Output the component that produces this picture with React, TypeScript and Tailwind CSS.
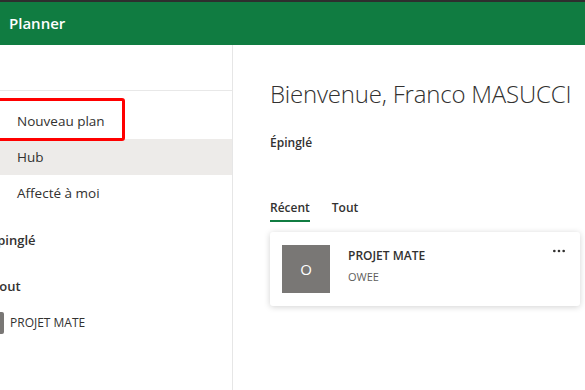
import { MoreHorizontal } from 'lucide-react';

export default function App() {
  const navItems = [
    { label: 'Nouveau plan', active: false },
    { label: 'Hub', active: true },
    { label: 'Affecté à moi', active: false },
  ];

  return (
    <div className="w-[585px] h-[390px] overflow-hidden bg-white flex flex-col font-['Open_Sans',sans-serif] text-[#323130]">
      {/* Header */}
      <div className="h-[45px] shrink-0 bg-[#107c41] border-t-2 border-[#2e2e2e] flex items-center px-[9px]">
        <span className="text-white font-semibold text-[15px]">Planner</span>
      </div>

      <div className="flex flex-1 min-h-0">
        {/* Sidebar */}
        <div className="w-[233px] shrink-0 border-r border-[#e6e6e6] flex flex-col relative">
          <div className="h-[46px] border-b border-[#e8e8e8]" />
          <div className="mt-[12px] flex flex-col">
            {navItems.map((item, i) => (
              <div
                key={i}
                className={`h-[36px] flex items-center pl-[17px] text-[13.5px] ${item.active ? 'bg-[#edebe9]' : ''}`}
              >
                {item.label}
              </div>
            ))}
          </div>
          <div className="-ml-[10px] mt-[18px] h-[24px] flex items-center text-[13px] font-semibold">Épinglé</div>
          <div className="-ml-[8px] mt-[22px] h-[24px] flex items-center text-[13px] font-semibold">Tout</div>
          <div className="mt-[12px] h-[24px] flex items-center gap-[6px] -ml-[18px] text-[12px]">
            <div className="w-[22px] h-[22px] bg-[#797775] rounded-[2px]" />
            <span>PROJET MATE</span>
          </div>

          {/* red annotation */}
          <div className="absolute left-[-10px] top-[53px] w-[135px] h-[43px] border-[3px] border-[#ff0000] rounded-[3px]" />
        </div>

        {/* Main */}
        <div className="flex-1 pl-[37px] pt-[31px]">
          <h1 className="text-[24px] font-light leading-[36px] tracking-[-0.2px] whitespace-nowrap text-[#323130]">
            Bienvenue, Franco MASUCCI
          </h1>
          <div className="mt-[22px] text-[12px] font-semibold">Épinglé</div>

          <div className="mt-[47px] flex gap-[22px] text-[12px] font-semibold">
            <div className="pb-[3px] border-b-2 border-[#107c41]">Récent</div>
            <div>Tout</div>
          </div>

          <div className="mt-[10px] w-[310px] h-[74px] bg-white rounded-[3px] shadow-[0_1px_6px_rgba(0,0,0,0.18)] flex items-start pl-[12px] pr-[14px] relative">
            <div className="mt-[13px] w-[48px] h-[48px] bg-[#797775] flex items-center justify-center text-white text-[15px]">
              O
            </div>
            <div className="ml-[18px] pt-[15px] flex flex-col gap-[5px]">
              <span className="text-[12px] font-semibold leading-[17px]">PROJET MATE</span>
              <span className="text-[11px] text-[#605e5c] leading-[16px]">OWEE</span>
            </div>
            <MoreHorizontal className="absolute right-[13px] top-[11px] w-[16px] h-[16px] text-[#323130]" />
          </div>
        </div>
      </div>
    </div>
  );
}
